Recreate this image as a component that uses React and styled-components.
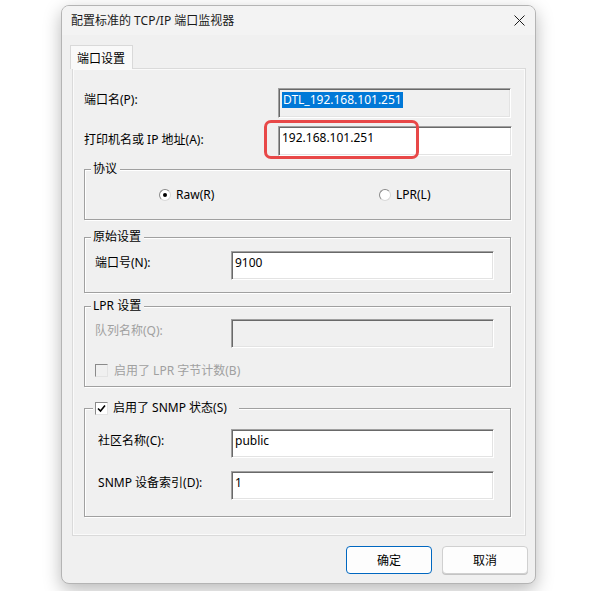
import React from 'react';
import styled, { createGlobalStyle } from 'styled-components';

const GlobalStyle = createGlobalStyle`
  html, body {
    margin: 0;
    padding: 0;
    background: #ffffff;
  }
  * {
    box-sizing: border-box;
  }
  body {
    font-family: "Noto Sans", "Noto Sans CJK SC", sans-serif;
    font-size: 12px;
    color: #000;
  }
`;

const Screen = styled.div`
  width: 600px;
  height: 591px;
  padding: 5px 0 0 61px;
  overflow: hidden;
`;

const Window = styled.div`
  width: 475px;
  display: flex;
  flex-direction: column;
  background: #f0f0f0;
  border: 1px solid #b4b4b4;
  border-radius: 8px;
  box-shadow: 0 6px 18px rgba(0, 0, 0, 0.28);
  overflow: hidden;
  padding-bottom: 9px;
`;

const TitleBar = styled.div`
  height: 29px;
  display: flex;
  align-items: center;
  justify-content: space-between;
  padding: 0 10px 0 9px;
  background: #f3f3f3;
`;

const Title = styled.span`
  font-size: 12px;
  line-height: 16px;
  color: #1a1a1a;
`;

const CloseIcon = styled.svg`
  width: 11px;
  height: 11px;
`;

const TabStrip = styled.div`
  display: flex;
  margin: 10px 0 0 8px;
  height: 23px;
`;

const Tab = styled.div`
  height: 24px;
  padding: 0 7px 0 6px;
  display: flex;
  align-items: center;
  background: #f9f9f9;
  border: 1px solid #d9d9d9;
  border-bottom: none;
  position: relative;
  z-index: 1;
  font-size: 12px;
`;

const Panel = styled.div`
  margin-left: 10px;
  width: 454px;
  height: 468px;
  border: 1px solid #dadada;
  box-shadow: inset 1px 1px 0 #fafafa, inset -1px -1px 0 #fafafa;
  background: #f0f0f0;
  padding: 19px 14px 0 11px;
  display: flex;
  flex-direction: column;
`;

const Row = styled.div`
  display: flex;
  align-items: center;
  margin-top: ${p => p.gap || 0}px;
`;

// labels sit a few pixels above the field's middle, as in the dialog
const Label = styled.span`
  width: ${p => p.w}px;
  flex-shrink: 0;
  font-size: 12px;
  line-height: 16px;
  margin-bottom: ${p => p.lift || 6}px;
  color: ${p => (p.disabled ? '#a0a0a0' : '#000')};
`;

const FieldWrap = styled.div`
  position: relative;
`;

const Field = styled.div`
  width: ${p => p.w}px;
  height: ${p => p.h || 29}px;
  display: flex;
  align-items: flex-start;
  padding: 3px 0 0 3px;
  font-size: 12px;
  line-height: 16px;
  background: ${p => (p.disabled ? '#f0f0f0' : '#ffffff')};
  border: 1px solid;
  border-color: #a0a0a0 #ffffff #ffffff #a0a0a0;
  box-shadow: inset 1px 1px 0 #696969, inset -1px -1px 0 #e3e3e3;
`;

const Selected = styled.span`
  background: #0078d7;
  color: #fff;
  line-height: 16px;
  padding: 0 1px 0 1px;
`;

const Highlight = styled.div`
  position: absolute;
  left: -14px;
  top: -6px;
  width: 155px;
  height: 39px;
  border: 3px solid #e84848;
  border-radius: 7px;
  pointer-events: none;
`;

const Group = styled.div`
  position: relative;
  margin-top: ${p => p.gap}px;
  width: 427px;
  height: ${p => p.h}px;
  border: 1px solid #a0a0a0;
  box-shadow: inset 1px 1px 0 #ffffff, 1px 1px 0 #ffffff;
  padding: ${p => p.pt || 0}px 0 0 10px;
  display: flex;
  flex-direction: column;
`;

const Legend = styled.div`
  position: absolute;
  top: -9px;
  left: ${p => p.left || 6}px;
  padding: 0 ${p => p.pr || 3}px 0 2px;
  background: #f0f0f0;
  display: flex;
  align-items: center;
  gap: 5px;
  font-size: 12px;
  line-height: 16px;
`;

const RadioRow = styled.div`
  flex: 1;
  display: flex;
  align-items: center;
  padding-left: 64px;
  margin-top: 0;
`;

const RadioItem = styled.label`
  width: ${p => p.w}px;
  display: flex;
  align-items: center;
  gap: 5px;
  font-size: 12px;
`;

const RadioCircle = styled.span`
  width: 12px;
  height: 12px;
  border-radius: 50%;
  border: 1px solid #8a8a8a;
  border-right-color: #d8d8d8;
  border-bottom-color: #d8d8d8;
  background: #fff;
  display: flex;
  align-items: center;
  justify-content: center;
  &::after {
    content: '';
    width: 4px;
    height: 4px;
    border-radius: 50%;
    background: ${p => (p.checked ? '#000' : 'transparent')};
  }
`;

const CheckRow = styled.div`
  display: flex;
  align-items: center;
  gap: 6px;
  margin-top: ${p => p.gap || 0}px;
  color: ${p => (p.disabled ? '#a0a0a0' : '#000')};
  font-size: 12px;
`;

const CheckBox = styled.span`
  width: 13px;
  height: 13px;
  border: 1px solid;
  border-color: #8a8a8a #e3e3e3 #e3e3e3 #8a8a8a;
  background: ${p => (p.disabled ? '#f0f0f0' : '#fff')};
  display: flex;
  align-items: center;
  justify-content: center;
`;

const ButtonBar = styled.div`
  display: flex;
  justify-content: flex-end;
  gap: 10px;
  margin-top: 10px;
  padding-right: 7px;
`;

const Button = styled.button`
  width: 86px;
  height: 28px;
  font-family: inherit;
  font-size: 12px;
  color: #000;
  background: #fdfdfd;
  border: 1px solid ${p => (p.primary ? '#0067c0' : '#d0d0d0')};
  border-radius: 4px;
  box-shadow: ${p => (p.primary ? 'inset 0 0 0 1px #ffffff' : '0 1px 0 #c4c4c4')};
  padding: 0;
`;

const Check = () => (
  <svg width="9" height="9" viewBox="0 0 9 9">
    <path d="M1 4.5 L3.5 7 L8 1.5" fill="none" stroke="#000" strokeWidth="1.6" />
  </svg>
);

export default function App() {
  return (
    <>
      <GlobalStyle />
      <Screen>
        <Window>
          <TitleBar>
            <Title>配置标准的 TCP/IP 端口监视器</Title>
            <CloseIcon viewBox="0 0 11 11">
              <path d="M0.5 0.5 L10.5 10.5 M10.5 0.5 L0.5 10.5" stroke="#1a1a1a" strokeWidth="1" />
            </CloseIcon>
          </TitleBar>
          <TabStrip>
            <Tab>端口设置</Tab>
          </TabStrip>
          <Panel>
            <Row>
              <Label w={194}>端口名(P):</Label>
              <Field w={234} h={30} disabled>
                <Selected>DTL_192.168.101.251</Selected>
              </Field>
            </Row>
            <Row gap={8}>
              <Label w={194} lift={3}>打印机名或 IP 地址(A):</Label>
              <FieldWrap>
                <Field w={234} h={30}>192.168.101.251</Field>
                <Highlight />
              </FieldWrap>
            </Row>

            <Group gap={13} h={51}>
              <Legend>协议</Legend>
              <RadioRow>
                <RadioItem w={220}>
                  <RadioCircle checked />
                  Raw(R)
                </RadioItem>
                <RadioItem w={120}>
                  <RadioCircle />
                  LPR(L)
                </RadioItem>
              </RadioRow>
            </Group>

            <Group gap={17} h={56} pt={13}>
              <Legend>原始设置</Legend>
              <Row>
                <Label w={136}>端口号(N):</Label>
                <Field w={263}>9100</Field>
              </Row>
            </Group>

            <Group gap={13} h={81} pt={12}>
              <Legend>LPR 设置</Legend>
              <Row>
                <Label w={136} disabled>队列名称(Q):</Label>
                <Field w={263} disabled />
              </Row>
              <CheckRow gap={13} disabled>
                <CheckBox disabled />
                启用了 LPR 字节计数(B)
              </CheckRow>
            </Group>

            <Group gap={21} h={109} pt={20}>
              <Legend left={8} pr={12}>
                <CheckBox>
                  <Check />
                </CheckBox>
                启用了 SNMP 状态(S)
              </Legend>
              <Row>
                <Label w={136}>&nbsp;社区名称(C):</Label>
                <Field w={263}>public</Field>
              </Row>
              <Row gap={13}>
                <Label w={136}>&nbsp;SNMP 设备索引(D):</Label>
                <Field w={263}>1</Field>
              </Row>
            </Group>
          </Panel>
          <ButtonBar>
            <Button primary>确定</Button>
            <Button>取消</Button>
          </ButtonBar>
        </Window>
      </Screen>
    </>
  );
}
